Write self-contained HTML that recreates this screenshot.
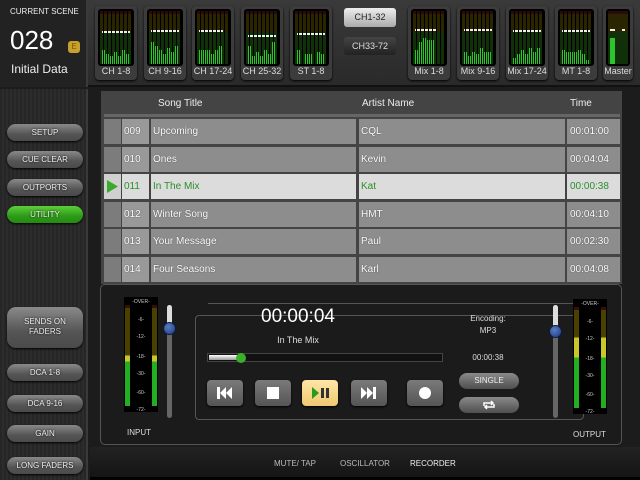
<!DOCTYPE html>
<html><head><meta charset="utf-8"><style>
*{margin:0;padding:0;box-sizing:border-box}
body{width:640px;height:480px;overflow:hidden;background:#1c1c1c;font-family:"Liberation Sans",sans-serif;position:relative;color:#fff}
.a{position:absolute}
.top{left:0;top:0;width:640px;height:87px;background:linear-gradient(#3a3a3a,#2a2a2a);border-bottom:2px solid #111}
.scene{left:0;top:0;width:88px;height:87px;background:#222;border-right:2px solid #3a3a3a}
.tile{width:42px;height:74px;top:6px;background:#3c3c3c;border-radius:4px;box-shadow:0 1px 2px #000}
.tile .m{position:absolute;left:3px;top:3px;width:36px;height:57px;background:#000;border-radius:3px;overflow:hidden}
.tile .g{position:absolute;left:2px;right:2px;top:2px;bottom:2px;background:linear-gradient(#2a0a0a 0,#2a0a0a 6%,#2a2400 6%,#2a2600 40%,#12300a 40%,#10300a 100%)}
.tile .sep{position:absolute;left:2px;right:2px;top:2px;bottom:2px;background:repeating-linear-gradient(90deg,transparent 0,transparent 3px,#000 3px,#000 4px)}
.tile .l{position:absolute;left:0;right:0;top:60px;font-size:9px;text-align:center;color:#ddd;white-space:nowrap}
.b{position:absolute;bottom:2px;width:3px;background:#2ec42e}
.w{position:absolute;height:2px;width:5px;background:#eee}
.left{left:0;top:89px;width:88px;height:391px;background:repeating-linear-gradient(90deg,#262626 0,#262626 2px,#2c2c2c 2px,#2c2c2c 4px);border-right:2px solid #3a3a3a}
.btn{position:absolute;left:7px;width:76px;height:17px;border-radius:9px;background:linear-gradient(#8a8a8a,#555 60%,#4a4a4a);font-size:8px;color:#eee;text-align:center;line-height:17px;box-shadow:0 1px 2px #000;text-shadow:0 0 2px #000}
.tbl{left:101px;top:91px;width:521px;height:193px;background:#444}
.hd{position:absolute;top:91px;height:25px;line-height:25px;font-size:10px;color:#eee}
.row{position:absolute;left:104px;width:516px;height:25px;font-size:10px;line-height:25px;color:#fff;text-shadow:0 0 1px #333}
.row div{position:absolute;top:0;height:25px;background:#8d8d8d}
.row .c0{left:0;width:17px;background:#7c7c7c}
.row .c1{left:18px;width:27px;background:#999;padding-left:2px}
.row .c2{left:47px;width:205px;padding-left:2px}
.row .c3{left:255px;width:206px;padding-left:2px}
.row .c4{left:463px;width:53px;padding-left:3px}
.row.sel div{background:#dcdcdc;color:#2a8f2a;text-shadow:none}
.row.sel .c0{background:#d0d0d0}
.rec{left:100px;top:284px;width:522px;height:161px;background:#1b1b1b;border:1px solid #555;border-radius:5px}
.pb{position:absolute;top:380px;width:36px;height:26px;border-radius:4px;background:linear-gradient(#7a7a7a,#555);box-shadow:0 1px 2px #000}
.rb{position:absolute;left:459px;width:60px;height:16px;border-radius:8px;background:linear-gradient(#8a8a8a,#4e4e4e);font-size:8px;color:#eee;text-align:center;line-height:16px}
.vm{position:absolute;width:34px;height:115px;background:#000}
.vm .bar{position:absolute;width:5px;top:8px;bottom:6px;background:linear-gradient(#3a0d0d 0,#3a0d0d 3%,#4a4000 3%,#4a4000 50%,#c8c828 50%,#c8c828 56%,#22b022 56%)}
.vm .t{position:absolute;left:7px;width:20px;text-align:center;font-size:5px;color:#ccc}
.fd{position:absolute;width:5px;height:113px;border-radius:3px;background:#666}
.knob{position:absolute;width:13px;height:13px;border-radius:50%;background:radial-gradient(circle at 40% 35%,#5a7cc0,#1b3a80);border:1px solid #0a1a40}
.tab{position:absolute;top:459px;font-size:8px;color:#bbb}
</style></head><body>
<div class="a top"></div>
<div class="a scene">
<div class="a" style="left:10px;top:7px;font-size:8px;color:#eee;white-space:nowrap">CURRENT SCENE</div>
<div class="a" style="left:10px;top:25px;font-size:26px;color:#fff">028</div>
<div class="a" style="left:68px;top:41px;width:12px;height:12px;border-radius:3px;background:#c8a030;color:#7a5a00;font-size:8px;text-align:center;line-height:12px">E</div>
<div class="a" style="left:11px;top:62px;font-size:12px;color:#eee;white-space:nowrap">Initial Data</div>
</div>

<div class="a tile" style="left:95px"><div class="m"><div class="g"></div><div class="b" style="left:4px;height:14px"></div><div class="b" style="left:8px;height:10px"></div><div class="b" style="left:12px;height:8px"></div><div class="b" style="left:16px;height:12px"></div><div class="b" style="left:20px;height:8px"></div><div class="b" style="left:24px;height:14px"></div><div class="b" style="left:28px;height:10px"></div><div class="w" style="left:4px;top:22px;width:28px"></div><div class="sep"></div></div><div class="l">CH 1-8</div></div>
<div class="a tile" style="left:144px"><div class="m"><div class="g"></div><div class="b" style="left:4px;height:22px"></div><div class="b" style="left:8px;height:18px"></div><div class="b" style="left:12px;height:14px"></div><div class="b" style="left:16px;height:10px"></div><div class="b" style="left:20px;height:16px"></div><div class="b" style="left:24px;height:12px"></div><div class="b" style="left:28px;height:18px"></div><div class="w" style="left:4px;top:21px;width:28px"></div><div class="sep"></div></div><div class="l">CH 9-16</div></div>
<div class="a tile" style="left:192px"><div class="m"><div class="g"></div><div class="b" style="left:4px;height:14px"></div><div class="b" style="left:8px;height:14px"></div><div class="b" style="left:12px;height:14px"></div><div class="b" style="left:16px;height:10px"></div><div class="b" style="left:20px;height:14px"></div><div class="b" style="left:24px;height:18px"></div><div class="w" style="left:4px;top:21px;width:24px"></div><div class="sep"></div></div><div class="l">CH 17-24</div></div>
<div class="a tile" style="left:241px"><div class="m"><div class="g"></div><div class="b" style="left:4px;height:18px"></div><div class="b" style="left:8px;height:8px"></div><div class="b" style="left:12px;height:12px"></div><div class="b" style="left:16px;height:8px"></div><div class="b" style="left:20px;height:14px"></div><div class="b" style="left:24px;height:10px"></div><div class="b" style="left:28px;height:22px"></div><div class="w" style="left:4px;top:26px;width:28px"></div><div class="sep"></div></div><div class="l">CH 25-32</div></div>
<div class="a tile" style="left:290px"><div class="m"><div class="g"></div><div class="b" style="left:4px;height:14px"></div><div class="b" style="left:12px;height:10px"></div><div class="b" style="left:16px;height:10px"></div><div class="b" style="left:24px;height:12px"></div><div class="b" style="left:28px;height:10px"></div><div class="w" style="left:4px;top:24px;width:28px"></div><div class="sep"></div></div><div class="l">ST 1-8</div></div>

<div class="a" style="left:344px;top:8px;width:52px;height:19px;border-radius:3px;background:linear-gradient(#eee,#aaa);color:#222;font-size:9px;text-align:center;line-height:19px">CH1-32</div>
<div class="a" style="left:344px;top:37px;width:52px;height:18px;border-radius:3px;background:linear-gradient(#444,#222);color:#ddd;font-size:9px;text-align:center;line-height:18px">CH33-72</div>

<div class="a tile" style="left:408px"><div class="m"><div class="g"></div><div class="b" style="left:4px;height:14px"></div><div class="b" style="left:8px;height:22px"></div><div class="b" style="left:12px;height:26px"></div><div class="b" style="left:16px;height:24px"></div><div class="b" style="left:20px;height:24px"></div><div class="w" style="left:4px;top:20px;width:22px"></div><div class="sep"></div></div><div class="l">Mix 1-8</div></div>
<div class="a tile" style="left:457px"><div class="m"><div class="g"></div><div class="b" style="left:4px;height:12px"></div><div class="b" style="left:8px;height:8px"></div><div class="b" style="left:12px;height:12px"></div><div class="b" style="left:16px;height:10px"></div><div class="b" style="left:20px;height:16px"></div><div class="b" style="left:24px;height:12px"></div><div class="b" style="left:28px;height:12px"></div><div class="w" style="left:4px;top:20px;width:28px"></div><div class="sep"></div></div><div class="l">Mix 9-16</div></div>
<div class="a tile" style="left:506px"><div class="m"><div class="g"></div><div class="b" style="left:4px;height:6px"></div><div class="b" style="left:8px;height:10px"></div><div class="b" style="left:12px;height:14px"></div><div class="b" style="left:16px;height:10px"></div><div class="b" style="left:20px;height:16px"></div><div class="b" style="left:24px;height:12px"></div><div class="b" style="left:28px;height:16px"></div><div class="w" style="left:4px;top:21px;width:28px"></div><div class="sep"></div></div><div class="l">Mix 17-24</div></div>
<div class="a tile" style="left:555px"><div class="m"><div class="g"></div><div class="b" style="left:4px;height:14px"></div><div class="b" style="left:8px;height:12px"></div><div class="b" style="left:12px;height:12px"></div><div class="b" style="left:16px;height:12px"></div><div class="b" style="left:20px;height:14px"></div><div class="b" style="left:24px;height:10px"></div><div class="b" style="left:28px;height:4px"></div><div class="w" style="left:4px;top:21px;width:28px"></div><div class="sep"></div></div><div class="l">MT 1-8</div></div>
<div class="a tile" style="left:603px;width:30px"><div class="m" style="width:24px"><div class="g"></div><div class="b" style="left:4px;width:5px;height:26px"></div><div class="w" style="left:4px;top:20px"></div><div class="w" style="left:16px;top:20px;width:3px"></div></div><div class="l">Master</div></div>

<div class="a left"></div>
<div class="btn" style="top:124px">SETUP</div>
<div class="btn" style="top:151px">CUE CLEAR</div>
<div class="btn" style="top:179px">OUTPORTS</div>
<div class="btn" style="top:206px;background:linear-gradient(#5fd03a,#2c9a18 60%,#268a12)">UTILITY</div>
<div class="btn" style="top:307px;height:41px;border-radius:9px;line-height:10px;padding-top:10px">SENDS ON<br>FADERS</div>
<div class="btn" style="top:364px">DCA 1-8</div>
<div class="btn" style="top:395px">DCA 9-16</div>
<div class="btn" style="top:425px">GAIN</div>
<div class="btn" style="top:457px">LONG FADERS</div>

<div class="a tbl"></div>
<div class="hd" style="left:158px">Song Title</div>
<div class="hd" style="left:362px">Artist Name</div>
<div class="hd" style="left:570px">Time</div>
<div class="a" style="left:104px;top:114px;width:516px;height:3px;background:#666"></div>
<div class="row" style="top:119px"><div class="c0"></div><div class="c1">009</div><div class="c2">Upcoming</div><div class="c3">CQL</div><div class="c4">00:01:00</div></div>
<div class="row" style="top:147px"><div class="c0"></div><div class="c1">010</div><div class="c2">Ones</div><div class="c3">Kevin</div><div class="c4">00:04:04</div></div>
<div class="row sel" style="top:174px"><div class="c0"><svg width="17" height="25"><polygon points="3,6 14,12.5 3,19" fill="#3aaa2a"/></svg></div><div class="c1">011</div><div class="c2">In The Mix</div><div class="c3">Kat</div><div class="c4">00:00:38</div></div>
<div class="row" style="top:202px"><div class="c0"></div><div class="c1">012</div><div class="c2">Winter Song</div><div class="c3">HMT</div><div class="c4">00:04:10</div></div>
<div class="row" style="top:229px"><div class="c0"></div><div class="c1">013</div><div class="c2">Your Message</div><div class="c3">Paul</div><div class="c4">00:02:30</div></div>
<div class="row" style="top:257px"><div class="c0"></div><div class="c1">014</div><div class="c2">Four Seasons</div><div class="c3">Karl</div><div class="c4">00:04:08</div></div>

<div class="a rec"></div>
<div class="vm" style="left:124px;top:297px"><div class="bar" style="left:1px"></div><div class="bar" style="left:28px"></div>
<div class="t" style="top:2px">-OVER-</div><div class="t" style="top:20px">-6-</div><div class="t" style="top:37px">-12-</div><div class="t" style="top:57px">-18-</div><div class="t" style="top:74px">-30-</div><div class="t" style="top:93px">-60-</div><div class="t" style="top:110px">-72-</div></div>
<div class="a" style="left:127px;top:428px;font-size:8px;color:#ddd">INPUT</div>
<div class="fd" style="left:167px;top:305px"></div><div class="a" style="left:167px;top:305px;width:5px;height:22px;border-radius:3px;background:#ddd"></div>
<div class="knob" style="left:163px;top:322px"></div>

<div class="a" style="left:208px;top:303px;width:376px;height:1px;background:#555"></div>
<div class="a" style="left:195px;top:315px;width:389px;height:105px;border:1px solid #555;border-radius:4px"></div>
<div class="a" style="left:223px;top:306px;width:150px;text-align:center;font-size:19px;color:#fff">00:00:04</div>
<div class="a" style="left:223px;top:335px;width:150px;text-align:center;font-size:9px;color:#ddd">In The Mix</div>
<div class="a" style="left:207px;top:353px;width:236px;height:9px;border:1px solid #444;background:#111"></div>
<div class="a" style="left:209px;top:355px;width:32px;height:5px;background:linear-gradient(#fff,#999)"></div>
<div class="a" style="left:236px;top:353px;width:10px;height:10px;border-radius:50%;background:#3ab02a"></div>
<div class="pb" style="left:207px"><svg width="36" height="26"><rect x="10" y="7" width="3" height="12" fill="#fff"/><polygon points="19,7 13,13 19,19" fill="#fff"/><polygon points="25,7 19,13 25,19" fill="#fff"/></svg></div>
<div class="pb" style="left:255px"><svg width="36" height="26"><rect x="12" y="7" width="12" height="12" fill="#fff"/></svg></div>
<div class="pb" style="left:302px;background:linear-gradient(#ffe6a8,#f0c870)"><svg width="36" height="26"><polygon points="10,7 17,13 10,19" fill="#2a9a1a"/><rect x="19" y="8" width="3" height="10" fill="#333"/><rect x="24" y="8" width="3" height="10" fill="#333"/></svg></div>
<div class="pb" style="left:351px"><svg width="36" height="26"><polygon points="10,7 16,13 10,19" fill="#fff"/><polygon points="16,7 22,13 16,19" fill="#fff"/><rect x="22" y="7" width="3" height="12" fill="#fff"/></svg></div>
<div class="pb" style="left:407px"><svg width="36" height="26"><circle cx="18" cy="13" r="6" fill="#fff"/></svg></div>
<div class="a" style="left:458px;top:313px;width:60px;text-align:center;font-size:8px;color:#ddd;line-height:12px">Encoding:<br>MP3</div>
<div class="a" style="left:458px;top:353px;width:60px;text-align:center;font-size:8px;color:#ddd">00:00:38</div>
<div class="rb" style="top:373px">SINGLE</div>
<div class="rb" style="top:397px"><svg width="16" height="12" style="margin-top:2px"><path d="M3 7V4h9M10 2l2 2-2 2M13 5v3H4M6 10L4 8l2-2" fill="none" stroke="#fff" stroke-width="1.5"/></svg></div>
<div class="fd" style="left:553px;top:305px"></div><div class="a" style="left:553px;top:305px;width:5px;height:22px;border-radius:3px;background:#ddd"></div>
<div class="knob" style="left:549px;top:325px"></div>
<div class="vm" style="left:573px;top:299px"><div class="bar" style="left:1px;background:linear-gradient(#3a0d0d 0,#3a0d0d 3%,#4a4000 3%,#4a4000 30%,#c8c828 30%,#c8c828 50%,#22b022 50%)"></div><div class="bar" style="left:28px;background:linear-gradient(#3a0d0d 0,#3a0d0d 3%,#4a4000 3%,#4a4000 30%,#c8c828 30%,#c8c828 50%,#22b022 50%)"></div>
<div class="t" style="top:2px">-OVER-</div><div class="t" style="top:20px">-6-</div><div class="t" style="top:37px">-12-</div><div class="t" style="top:57px">-18-</div><div class="t" style="top:74px">-30-</div><div class="t" style="top:93px">-60-</div><div class="t" style="top:110px">-72-</div></div>
<div class="a" style="left:573px;top:430px;font-size:8px;color:#ddd">OUTPUT</div>

<div class="a" style="left:90px;top:447px;width:550px;height:30px;background:linear-gradient(#222,#151515)"></div>
<div class="a" style="left:90px;top:477px;width:550px;height:3px;background:#000"></div>
<div class="tab" style="left:274px">MUTE/ TAP</div>
<div class="tab" style="left:340px">OSCILLATOR</div>
<div class="tab" style="left:410px;color:#eee">RECORDER</div>
</body></html>
